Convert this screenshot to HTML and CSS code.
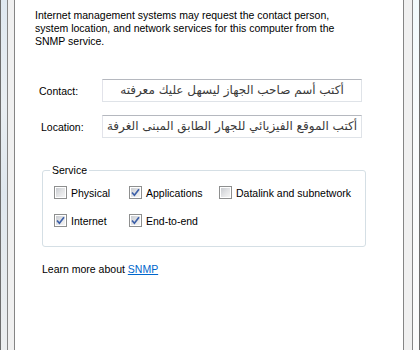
FILE: index.html
```html
<!DOCTYPE html>
<html lang="en">

<head>
    <meta charset="utf-8">
    <title>SNMP Agent</title>
    <link rel="stylesheet" href="styles.css">
</head>

<body>
    <div class="window">
        <div class="rim-left"></div>

        <div class="chrome">
            <div class="sheet">
                <p class="intro">
                    Internet management systems may request the contact person,<br>
                    system location, and network services for this computer from the<br>
                    SNMP service.
                </p>

                <div class="field-row">
                    <label class="field-label contact">Contact:</label>
                    <div class="text-box" dir="rtl">أكتب أسم صاحب الجهاز ليسهل عليك معرفته</div>
                </div>

                <div class="field-row">
                    <label class="field-label location">Location:</label>
                    <div class="text-box" dir="rtl">أكتب الموقع الفيزيائي للجهار الطابق المبنى الغرفة</div>
                </div>

                <fieldset class="service">
                    <legend>Service</legend>
                    <div class="check-grid">
                        <div class="check-item">
                            <span class="box"><span class="box-inner"></span></span>
                            <span>Physical</span>
                        </div>
                        <div class="check-item">
                            <span class="box"><span class="box-inner">
                                <svg width="9" height="9" viewBox="0 0 9 9"><path d="M1 4.5 L3.4 7.2 L8 1.2" fill="none" stroke="#3c5fa8" stroke-width="1.7"/></svg>
                            </span></span>
                            <span>Applications</span>
                        </div>
                        <div class="check-item">
                            <span class="box"><span class="box-inner"></span></span>
                            <span>Datalink and subnetwork</span>
                        </div>
                        <div class="check-item">
                            <span class="box"><span class="box-inner">
                                <svg width="9" height="9" viewBox="0 0 9 9"><path d="M1 4.5 L3.4 7.2 L8 1.2" fill="none" stroke="#3c5fa8" stroke-width="1.7"/></svg>
                            </span></span>
                            <span>Internet</span>
                        </div>
                        <div class="check-item">
                            <span class="box"><span class="box-inner">
                                <svg width="9" height="9" viewBox="0 0 9 9"><path d="M1 4.5 L3.4 7.2 L8 1.2" fill="none" stroke="#3c5fa8" stroke-width="1.7"/></svg>
                            </span></span>
                            <span>End-to-end</span>
                        </div>
                    </div>
                </fieldset>

                <p class="learn">Learn more about <a href="#">SNMP</a></p>
            </div>
        </div>

        <div class="rim-right"></div>
    </div>
</body>

</html>
```

FILE: styles.css
```css
html {
    font-family: 'Liberation Sans', Arial, sans-serif;
    font-size: 10.5px;
    color: #000;
}

body {
    margin: 0px;
    background: #fff;
}

.window {
    display: flex;
    flex-direction: row;
    height: 350px;
}

.rim-left {
    width: 7px;
    box-sizing: border-box;
    border-left: 1px solid #6d6d6d;
    background: linear-gradient(180deg, #dfe8f0 0%, #e9eef2 30%, #dfe7ee 55%, #eceeef 100%);
}

.rim-right {
    width: 7px;
    box-sizing: border-box;
    border-right: 1px solid #6d6d6d;
    background: linear-gradient(180deg, #f2fafc 0%, #fafcfd 40%, #fbfbfb 100%);
}

.chrome {
    flex: 1;
    display: flex;
    border-left: 1px solid #858585;
    border-right: 1px solid #858585;
    background: #f0f0f0;
    padding: 0px 8px 0px 6px;
}

.sheet {
    flex: 1;
    background: #fff;
    border-left: 1px solid #858585;
    border-right: 1px solid #858585;
}

.intro {
    margin: 0px;
    padding: 9px 0px 0px 20px;
    line-height: 13px;
}

.field-row {
    display: flex;
    align-items: center;
    margin-top: 31px;
}

.field-row + .field-row {
    margin-top: 13px;
}

.field-label {
    box-sizing: border-box;
}

.field-label.contact {
    width: 87px;
    padding-left: 24px;
}

.field-label.location {
    width: 87px;
    padding-left: 26px;
}

.text-box {
    width: 260px;
    height: 23px;
    box-sizing: border-box;
    border: 1px solid #dfe3e8;
    border-top-color: #b5b8bf;
    border-left-color: #e2e3ea;
    text-align: center;
    font-family: 'DejaVu Sans', sans-serif;
    font-size: 12px;
    line-height: 21px;
    color: #3a3a3a;
    white-space: nowrap;
    overflow: hidden;
}

.service {
    margin: 26px 0px 0px 27px;
    width: 324px;
    box-sizing: border-box;
    border: 1px solid #d5dfe5;
    border-radius: 3px;
    padding: 9px 0px 19px 11px;
}

.service legend {
    padding: 0px 2px;
    margin-left: -4px;
    line-height: 13px;
}

.check-grid {
    display: grid;
    grid-template-columns: 75px 90px auto;
    row-gap: 15px;
}

.check-item {
    display: flex;
    align-items: center;
    gap: 4px;
    height: 13px;
}

.box {
    width: 13px;
    height: 13px;
    box-sizing: border-box;
    border: 1px solid #8e8f8f;
    background: #fff;
    padding: 1px;
    flex-shrink: 0;
}

.box-inner {
    display: flex;
    align-items: center;
    justify-content: center;
    width: 9px;
    height: 9px;
    background: linear-gradient(135deg, #c9ccd1 0%, #e2e3e5 50%, #f5f5f5 100%);
}

.learn {
    margin: 16px 0px 0px 27px;
    line-height: 13px;
}

.learn a {
    color: #0066cc;
}
```
